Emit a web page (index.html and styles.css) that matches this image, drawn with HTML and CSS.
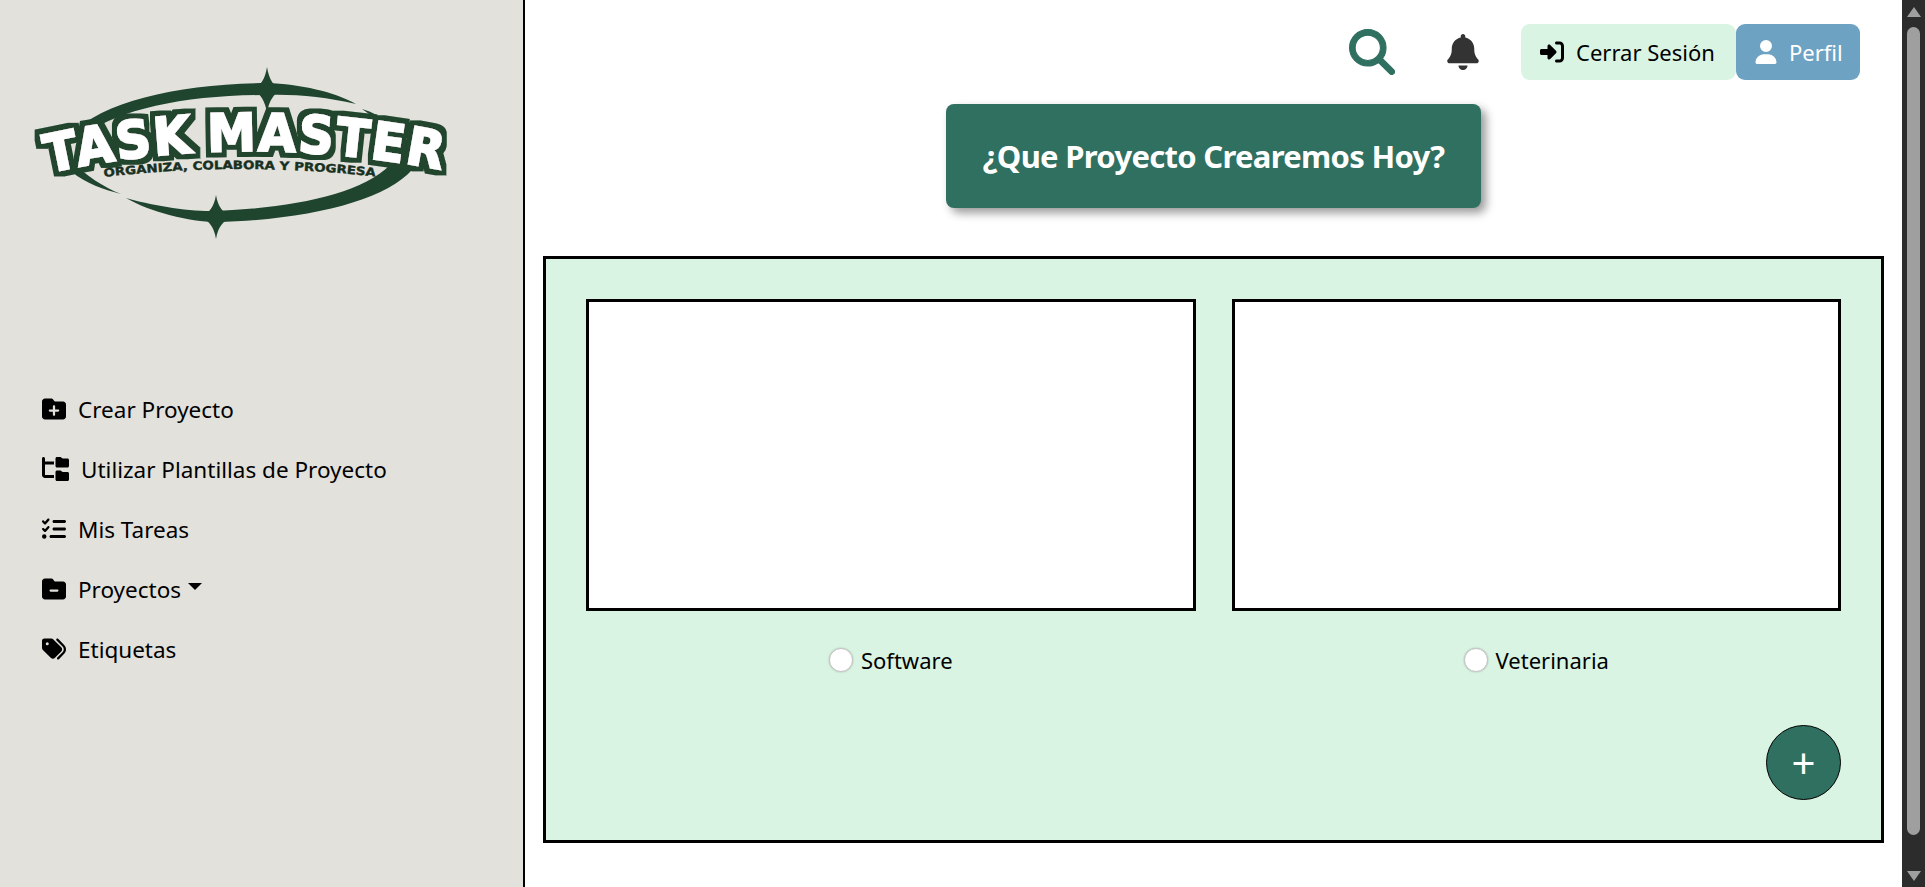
FILE: index.html
```html
<!DOCTYPE html>
<html lang="es">
<head>
    <meta charset="UTF-8">
    <meta name="viewport" content="width=device-width, initial-scale=1.0">
    <title>Task Master</title>
    <link rel="stylesheet" href="styles.css">
</head>
<body>
    <aside class="sidebar">
        <svg class="logo" viewBox="0 0 523 300" role="img" aria-label="Task Master">
            <defs>
                <filter id="outline" x="-10%" y="-30%" width="120%" height="160%">
                    <feMorphology in="SourceAlpha" operator="dilate" radius="4.5" result="fat"/>
                    <feFlood flood-color="#20452f"/>
                    <feComposite in2="fat" operator="in" result="edge"/>
                    <feMerge>
                        <feMergeNode in="edge"/>
                        <feMergeNode in="SourceGraphic"/>
                    </feMerge>
                </filter>
                <path id="archBig" d="M48 173 Q247 129 457 173"/>
                <path id="archSmall" d="M104 177 Q240 161 378 177"/>
            </defs>
            <g class="logo-ring">
                <path d="M70 135 C105 100 180 84 267 83 C300 84 335 92 356 104 C325 97 295 94 267 95 C190 95 120 108 85 135 Z"/>
                <path d="M362 109 C372 112 382 117 390 123 L380 124 C375 118 368 113 362 109 Z"/>
                <path d="M412 170 C385 200 310 220 216 222 C190 222 150 212 126 198 C150 205 190 212 216 211 C290 208 360 195 390 165 Z"/>
                <path d="M70 160 C85 175 105 188 121 194 C105 190 85 183 72 172 Z"/>
                <path d="M267 67 C269 80 274 86 281 90 C274 94 269 100 267 113 C265 100 260 94 253 90 C260 86 265 80 267 67 Z"/>
                <path d="M216 195 C218 207 223 213 232 217 C223 221 218 227 216 239 C214 227 209 221 201 217 C209 213 214 207 216 195 Z"/>
            </g>
            <text class="logo-title" filter="url(#outline)"><textPath href="#archBig" textLength="398" lengthAdjust="spacingAndGlyphs">TASK MASTER</textPath></text>
            <text class="logo-sub"><textPath href="#archSmall" textLength="272" lengthAdjust="spacingAndGlyphs">ORGANIZA, COLABORA Y PROGRESA</textPath></text>
        </svg>

        <nav class="menu">
            <a class="menu-item">
                <svg class="icon" viewBox="0 0 512 512"><path d="M512 416c0 35.3-28.7 64-64 64H64c-35.3 0-64-28.7-64-64V96C0 60.7 28.7 32 64 32H192c20.1 0 39.1 9.5 51.2 25.6l19.2 25.6c6 8.1 15.5 12.8 25.6 12.8H448c35.3 0 64 28.7 64 64V416zM232 376c0 13.3 10.7 24 24 24s24-10.7 24-24V312h64c13.3 0 24-10.7 24-24s-10.7-24-24-24H280V200c0-13.3-10.7-24-24-24s-24 10.7-24 24v64H168c-13.3 0-24 10.7-24 24s10.7 24 24 24h64v64z"/></svg>
                Crear Proyecto
            </a>
            <a class="menu-item">
                <svg class="icon icon-wide" viewBox="0 0 576 512"><path d="M64 32C64 14.3 49.7 0 32 0S0 14.3 0 32v96V384c0 35.3 28.7 64 64 64H256V384H64V160H256V96H64V32zM288 192c0 17.7 14.3 32 32 32H544c17.7 0 32-14.3 32-32V64c0-17.7-14.3-32-32-32H445.3c-8.5 0-16.6-3.4-22.6-9.4L409.4 9.4c-6-6-14.1-9.4-22.6-9.4H320c-17.7 0-32 14.3-32 32V192zm0 288c0 17.7 14.3 32 32 32H544c17.7 0 32-14.3 32-32V352c0-17.7-14.3-32-32-32H445.3c-8.5 0-16.6-3.4-22.6-9.4l-13.3-13.3c-6-6-14.1-9.4-22.6-9.4H320c-17.7 0-32 14.3-32 32V480z"/></svg>
                Utilizar Plantillas de Proyecto
            </a>
            <a class="menu-item">
                <svg class="icon" viewBox="0 0 512 512"><path d="M152.1 38.2c9.9 8.9 10.7 24 1.8 33.9l-72 80c-4.4 4.9-10.6 7.8-17.2 7.9s-12.9-2.4-17.6-7L7 113C-2.3 103.6-2.3 88.4 7 79s24.6-9.4 33.9 0l22.1 22.1 55.1-61.2c8.9-9.9 24-10.7 33.9-1.8zm0 160c9.9 8.9 10.7 24 1.8 33.9l-72 80c-4.4 4.9-10.6 7.8-17.2 7.9s-12.9-2.4-17.6-7L7 273c-9.4-9.4-9.4-24.6 0-33.9s24.6-9.4 33.9 0l22.1 22.1 55.1-61.2c8.9-9.9 24-10.7 33.9-1.8zM224 96c0-17.7 14.3-32 32-32H480c17.7 0 32 14.3 32 32s-14.3 32-32 32H256c-17.7 0-32-14.3-32-32zm0 160c0-17.7 14.3-32 32-32H480c17.7 0 32 14.3 32 32s-14.3 32-32 32H256c-17.7 0-32-14.3-32-32zM160 416c0-17.7 14.3-32 32-32H480c17.7 0 32 14.3 32 32s-14.3 32-32 32H192c-17.7 0-32-14.3-32-32zM48 368a48 48 0 1 1 0 96 48 48 0 1 1 0-96z"/></svg>
                Mis Tareas
            </a>
            <a class="menu-item">
                <svg class="icon" viewBox="0 0 512 512"><path d="M448 480H64c-35.3 0-64-28.7-64-64V96C0 60.7 28.7 32 64 32H192c20.1 0 39.1 9.5 51.2 25.6l19.2 25.6c6 8.1 15.5 12.8 25.6 12.8H448c35.3 0 64 28.7 64 64V416c0 35.3-28.7 64-64 64zM184 264c-13.3 0-24 10.7-24 24s10.7 24 24 24H328c13.3 0 24-10.7 24-24s-10.7-24-24-24H184z"/></svg>
                Proyectos<span class="caret"></span>
            </a>
            <a class="menu-item">
                <svg class="icon" viewBox="0 0 512 512"><path d="M345 39.1L472.8 168.4c52.4 53 52.4 138.2 0 191.2L360.8 472.9c-9.3 9.4-24.5 9.5-33.9 .2s-9.5-24.5-.2-33.9L438.6 325.9c33.9-34.3 33.9-89.4 0-123.7L310.9 72.9c-9.3-9.4-9.2-24.6 .2-33.9s24.6-9.2 33.9 .2zM0 229.5V80C0 53.5 21.5 32 48 32H197.5c17 0 33.3 6.7 45.3 18.7l168 168c25 25 25 65.5 0 90.5L277.3 442.7c-25 25-65.5 25-90.5 0l-168-168C6.7 262.7 0 246.5 0 229.5zM144 144a32 32 0 1 0 -64 0 32 32 0 1 0 64 0z"/></svg>
                Etiquetas
            </a>
        </nav>
    </aside>

    <main class="content">
        <header class="topbar">
            <svg class="search-icon" viewBox="-6 -6 524 524"><path d="M416 208c0 45.9-14.9 88.3-40 122.7L502.6 457.4c12.5 12.5 12.5 32.8 0 45.3s-32.8 12.5-45.3 0L330.7 376c-34.4 25.2-76.8 40-122.7 40C93.1 416 0 322.9 0 208S93.1 0 208 0S416 93.1 416 208zM208 352a144 144 0 1 0 0-288 144 144 0 1 0 0 288z"/></svg>
            <svg class="bell-icon" viewBox="0 0 448 512"><path d="M224 0c-17.7 0-32 14.3-32 32V51.2C119 66 64 130.6 64 208v18.8c0 47-17.3 92.4-48.6 127.6l-7.4 8.3c-8.4 9.4-10.4 22.9-5.3 34.4S19.4 416 32 416H416c12.6 0 24-7.4 29.2-18.9s3.1-25-5.3-34.4l-7.4-8.3C401.3 319.2 384 273.9 384 226.8V208c0-77.4-55-142-128-156.8V32c0-17.7-14.3-32-32-32zm45.3 493.3c12-12 18.7-28.3 18.7-45.3H224 160c0 17 6.7 33.3 18.7 45.3s28.3 18.7 45.3 18.7s33.3-6.7 45.3-18.7z"/></svg>
            <a class="top-btn logout">
                <svg class="top-icon" viewBox="0 0 512 512"><path d="M217.9 105.9L340.7 228.7c7.2 7.2 11.3 17.1 11.3 27.3s-4.1 20.1-11.3 27.3L217.9 406.1c-6.4 6.4-15 9.9-24 9.9c-18.7 0-33.9-15.2-33.9-33.9l0-62.1L32 320c-17.7 0-32-14.3-32-32l0-64c0-17.7 14.3-32 32-32l128 0 0-62.1c0-18.7 15.2-33.9 33.9-33.9c9 0 17.6 3.6 24 9.9zM352 416l64 0c17.7 0 32-14.3 32-32l0-256c0-17.7-14.3-32-32-32l-64 0c-17.7 0-32-14.3-32-32s14.3-32 32-32l64 0c53 0 96 43 96 96l0 256c0 53-43 96-96 96l-64 0c-17.7 0-32-14.3-32-32s14.3-32 32-32z"/></svg>
                Cerrar Sesión
            </a>
            <a class="top-btn profile">
                <svg class="top-icon" viewBox="0 0 448 512"><path d="M224 256A128 128 0 1 0 224 0a128 128 0 1 0 0 256zm-45.7 48C79.8 304 0 383.8 0 482.3C0 498.7 13.3 512 29.7 512H418.3c16.4 0 29.7-13.3 29.7-29.7C448 383.8 368.2 304 269.7 304H178.3z"/></svg>
                Perfil
            </a>
        </header>

        <h1 class="title">¿Que Proyecto Crearemos Hoy?</h1>

        <section class="panel">
            <div class="templates">
                <div class="template">
                    <div class="preview"></div>
                    <label class="choice"><input type="radio" name="plantilla"> Software</label>
                </div>
                <div class="template">
                    <div class="preview"></div>
                    <label class="choice"><input type="radio" name="plantilla"> Veterinaria</label>
                </div>
            </div>
            <button class="add-btn" type="button">+</button>
        </section>
    </main>

    <div class="scrollbar">
        <span class="arrow-up"></span>
        <span class="thumb"></span>
        <span class="arrow-down"></span>
    </div>
</body>
</html>
```

FILE: styles.css
```css
html, body {
    height: 100%;
}
body {
    margin: 0;
    height: 887px;
    display: flex;
    overflow: hidden;
    background-color: #fff;
    color: #000;
    font-family: "Noto Sans", "Open Sans", sans-serif;
    font-size: 22px;
}

/* barra lateral */
.sidebar {
    width: 523px;
    flex-shrink: 0;
    background-color: #e2e1dc;
    border-right: 2px solid #000;
}
.logo {
    display: block;
    width: 523px;
    height: 300px;
}
.logo-ring {
    fill: #20452f;
}
.logo-title {
    font-family: "DejaVu Sans", sans-serif;
    font-weight: bold;
    font-size: 52px;
    letter-spacing: 2px;
    word-spacing: -6px;
    fill: #fff;
    stroke: #fff;
    stroke-width: 2px;
}
.logo-sub {
    font-family: "DejaVu Sans", sans-serif;
    font-weight: bold;
    font-size: 11.5px;
    fill: #17301f;
    stroke: #17301f;
    stroke-width: 0.4px;
}
.menu {
    margin-top: 79px;
}
.menu-item {
    display: flex;
    align-items: center;
    height: 60px;
    padding-left: 42px;
    gap: 12px;
    font-size: 22.5px;
}
.icon {
    width: 24px;
    height: 24px;
    flex-shrink: 0;
}
.icon-wide {
    width: 27px;
}
.caret {
    width: 0;
    height: 0;
    margin-left: -5px;
    margin-bottom: 5px;
    border-top: 7px solid #000;
    border-left: 7px solid transparent;
    border-right: 7px solid transparent;
}

/* contenido */
.content {
    flex: 1;
    min-width: 0;
    display: flex;
    flex-direction: column;
}
.topbar {
    display: flex;
    justify-content: flex-end;
    align-items: center;
    padding: 24px 42px 0 0;
}
.search-icon {
    width: 46px;
    height: 46px;
    fill: #2f7060;
    stroke: #2f7060;
    stroke-width: 12px;
    margin-right: 52px;
}
.bell-icon {
    width: 32px;
    height: 36px;
    fill: #333;
    margin-right: 42px;
}
.top-btn {
    display: flex;
    align-items: center;
    gap: 12px;
    height: 56px;
    box-sizing: border-box;
    border-radius: 9px;
}
.logout {
    width: 215px;
    padding-left: 19px;
    background-color: #daf4e3;
}
.profile {
    width: 124px;
    padding-left: 19px;
    background-color: #6ea2c3;
    color: #fff;
}
.top-icon {
    height: 24px;
    width: 24px;
    flex-shrink: 0;
}
.logout .top-icon {
    fill: #000;
}
.profile .top-icon {
    width: 22px;
    fill: #fff;
}
.title {
    align-self: center;
    width: 535px;
    box-sizing: border-box;
    height: 104px;
    margin: 24px 0 48px;
    display: flex;
    align-items: center;
    justify-content: center;
    background-color: #2f7060;
    color: #fff;
    border-radius: 8px;
    box-shadow: 5px 5px 10px rgba(0, 0, 0, 0.4);
    font-size: 31px;
    font-weight: 700;
    letter-spacing: -0.7px;
}
.panel {
    height: 587px;
    box-sizing: border-box;
    margin: 0 18px;
    padding: 40px;
    display: flex;
    flex-direction: column;
    background-color: #daf4e3;
    border: 3px solid #000;
}
.templates {
    display: grid;
    grid-template-columns: 1fr 1fr;
    gap: 36px;
}
.preview {
    height: 312px;
    box-sizing: border-box;
    background-color: #fff;
    border: 3px solid #000;
}
.choice {
    display: flex;
    justify-content: center;
    align-items: center;
    gap: 8px;
    margin-top: 34px;
}
.choice input {
    appearance: none;
    width: 24px;
    height: 24px;
    margin: 0;
    background-color: #fff;
    border: 1px solid #c4c4c4;
    border-radius: 50%;
    box-shadow: 0 0 2px rgba(0, 0, 0, 0.25);
}
.add-btn {
    align-self: flex-end;
    margin-top: auto;
    width: 75px;
    height: 75px;
    padding: 0;
    background-color: #2f7060;
    color: #fff;
    border: 1px solid #000;
    border-radius: 50%;
    font-family: inherit;
    font-size: 42px;
    line-height: 1;
}

/* barra de desplazamiento */
.scrollbar {
    width: 23px;
    flex-shrink: 0;
    display: flex;
    flex-direction: column;
    align-items: center;
    box-sizing: border-box;
    padding-top: 7px;
    background-color: #2c2c2c;
}
.arrow-up {
    border-bottom: 10px solid #9f9f9f;
    border-left: 7px solid transparent;
    border-right: 7px solid transparent;
}
.thumb {
    width: 13px;
    height: 808px;
    margin: 10px 0 36px;
    background-color: #9f9f9f;
    border-radius: 7px;
}
.arrow-down {
    border-top: 10px solid #9f9f9f;
    border-left: 7px solid transparent;
    border-right: 7px solid transparent;
}
```
